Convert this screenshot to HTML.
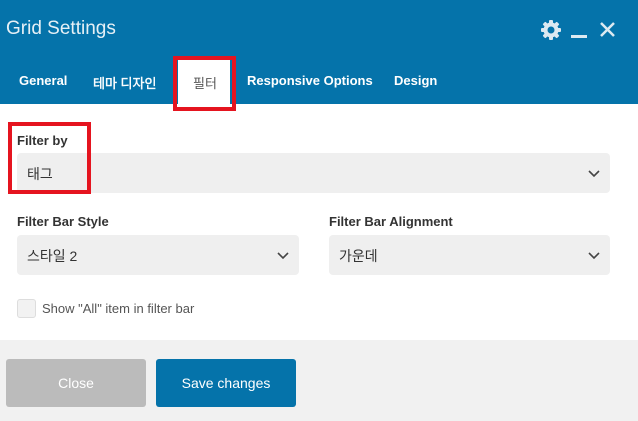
<!DOCTYPE html>
<html><head><style>
*{box-sizing:border-box;margin:0;padding:0}
body{width:638px;height:421px;overflow:hidden;font-family:"Liberation Sans","Noto Sans CJK KR",sans-serif;background:#fff;position:relative}
.hd{position:absolute;left:0;top:0;width:638px;height:104px;background:#0573aa}
.title{position:absolute;left:6px;top:18px;font-size:19px;color:#e6f0f6}
.tab{position:absolute;top:73px;color:#fff;font-size:13px;font-weight:bold}
.act{position:absolute;left:178px;top:60px;width:52px;height:45px;background:#fff}
.red{position:absolute;border:4px solid #e5141f}
.lbl{position:absolute;font-size:13px;font-weight:bold;color:#333}
.sel{position:absolute;height:40px;background:#efefef;border-radius:4px;font-size:14px;color:#333;padding:11px 10px}
.sel svg{position:absolute;right:10px;top:17px}
.ft{position:absolute;left:0;top:340px;width:638px;height:81px;background:#f1f1f1}
.btn{position:absolute;top:359px;width:140px;height:48px;border-radius:3px;color:#fff;font-size:14px;text-align:center;line-height:48px}
</style></head><body>
<div class="hd">
<div class="title">Grid Settings</div>
<svg style="position:absolute;left:540px;top:19px" width="22" height="22" viewBox="0 0 22 22"><g fill="#dce9f1"><circle cx="11" cy="11" r="7.5"/><g><rect x="9" y="1" width="4" height="20" rx="1"/><rect x="1" y="9" width="20" height="4" rx="1"/><rect x="9" y="1" width="4" height="20" rx="1" transform="rotate(45 11 11)"/><rect x="9" y="1" width="4" height="20" rx="1" transform="rotate(-45 11 11)"/></g></g><circle cx="11" cy="11" r="3.5" fill="#0573aa"/></svg>
<div style="position:absolute;left:571px;top:35px;width:16px;height:3px;background:#dce9f1"></div>
<svg style="position:absolute;left:599px;top:21px" width="17" height="17" viewBox="0 0 17 17"><path d="M2 2L15 15M15 2L2 15" stroke="#dce9f1" stroke-width="2.5"/></svg>
<div class="act"></div>
<div class="tab" style="left:19px">General</div>
<div class="tab" style="left:93px;font-weight:normal;-webkit-text-stroke:0.4px #fff">테마 디자인</div>
<div class="tab" style="left:193px;color:#555;font-weight:normal">필터</div>
<div class="tab" style="left:247px">Responsive Options</div>
<div class="tab" style="left:394px">Design</div>
</div>
<div class="red" style="left:173px;top:56px;width:63px;height:55px"></div>
<div class="lbl" style="left:17px;top:133px">Filter by</div>
<div class="sel" style="left:17px;top:153px;width:593px">태그<svg width="12" height="8"><path d="M1 1L6 6L11 1" stroke="#444" stroke-width="1.6" fill="none"/></svg></div>
<div class="red" style="left:8px;top:122px;width:83px;height:72px"></div>
<div class="lbl" style="left:17px;top:214px">Filter Bar Style</div>
<div class="sel" style="left:17px;top:235px;width:282px">스타일 2<svg width="12" height="8"><path d="M1 1L6 6L11 1" stroke="#444" stroke-width="1.6" fill="none"/></svg></div>
<div class="lbl" style="left:329px;top:214px">Filter Bar Alignment</div>
<div class="sel" style="left:329px;top:235px;width:281px">가운데<svg width="12" height="8"><path d="M1 1L6 6L11 1" stroke="#444" stroke-width="1.6" fill="none"/></svg></div>
<div style="position:absolute;left:17px;top:299px;width:19px;height:19px;border:1px solid #ddd;background:#f2f2f2;border-radius:3px"></div>
<div style="position:absolute;left:42px;top:301px;font-size:13px;color:#555">Show "All" item in filter bar</div>
<div class="ft"></div>
<div class="btn" style="left:6px;background:#bbbbbb">Close</div>
<div class="btn" style="left:156px;background:#0573aa">Save changes</div>
</body></html>
